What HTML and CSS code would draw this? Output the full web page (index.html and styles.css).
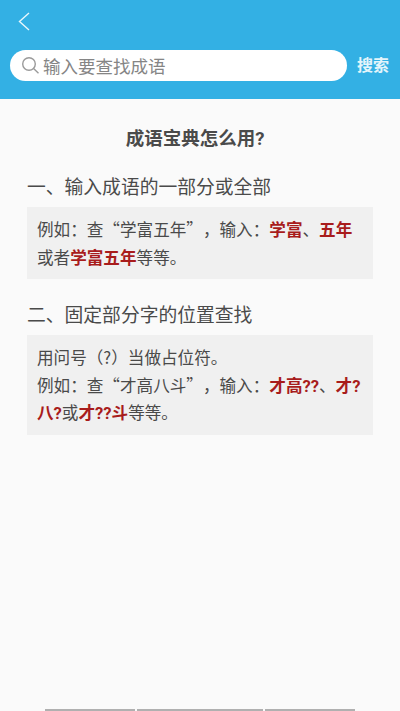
FILE: index.html
```html
<!DOCTYPE html>
<html lang="zh-CN">
<head>
  <meta charset="UTF-8" />
  <meta name="viewport" content="width=device-width, initial-scale=1.0" />
  <title>成语宝典怎么用</title>
  <link rel="stylesheet" href="styles.css">
</head>
<body>
  <header class="header">
    <div class="back-row">
      <svg class="back-icon" width="14" height="20" viewBox="0 0 14 20">
        <path d="M12 2 L2.5 10.5 L12 19" fill="none" stroke="#e8f7fc" stroke-width="1.4" />
      </svg>
    </div>
    <div class="search-row">
      <div class="search-box">
        <svg class="search-icon" width="19" height="19" viewBox="0 0 19 19">
          <circle cx="8" cy="8" r="6.3" fill="none" stroke="#9a9a9a" stroke-width="1.4" />
          <path d="M12.6 12.6 L17.5 17.2" fill="none" stroke="#9a9a9a" stroke-width="1.4" />
        </svg>
        <span class="placeholder">输入要查找成语</span>
      </div>
      <span class="search-btn">搜索</span>
    </div>
  </header>

  <main class="content">
    <h1>成语宝典怎么用?</h1>

    <h2>一、输入成语的一部分或全部</h2>
    <div class="note">
      <p>例如&#xFF1A;查“学富五年”&#xFF0C;输入&#xFF1A;<b>学富</b>、<b>五年</b>或者<b>学富五年</b>等等。</p>
    </div>

    <h2>二、固定部分字的位置查找</h2>
    <div class="note">
      <p>用问号&#xFF08;?&#xFF09;当做占位符。</p>
      <p>例如&#xFF1A;查“才高八斗”&#xFF0C;输入&#xFF1A;<b>才高??</b>、<b>才?八?</b>或<b>才??斗</b>等等。</p>
    </div>
  </main>

  <div class="nav-bars">
    <span class="bar-a"></span>
    <span class="bar-b"></span>
    <span class="bar-a"></span>
  </div>
</body>
</html>
```

FILE: styles.css
```css
body {
  font-family: "Noto Sans CJK SC", "Liberation Sans", sans-serif;
  margin: 0;
  height: 711px;
  overflow: hidden;
  display: flex;
  flex-direction: column;
  background-color: #fafafa;
  color: #4a4a4a;
  text-spacing-trim: space-all;
}

.header {
  height: 99px;
  background-color: #33b0e4;
  flex-shrink: 0;
}

.back-row {
  height: 50px;
  padding: 11px 0 0 17px;
  box-sizing: border-box;
}

.back-icon {
  display: block;
}

.search-row {
  display: flex;
  align-items: flex-start;
  padding-left: 10px;
}

.search-box {
  width: 337px;
  height: 31px;
  background: #fff;
  border-radius: 16px;
  display: flex;
  align-items: center;
  padding-left: 11px;
  box-sizing: border-box;
}

.search-icon {
  flex-shrink: 0;
}

.placeholder {
  margin-left: 3px;
  font-size: 17.5px;
  line-height: 31px;
  color: #858585;
}

.search-btn {
  margin-left: 10px;
  font-size: 16px;
  line-height: 29px;
  font-weight: bold;
  color: #e4f5fb;
}

.content {
  flex: 1;
  padding: 0 27px;
}

h1 {
  margin: 28px 0 0;
  padding-right: 10px;
  font-family: Roboto, "Noto Sans CJK SC", sans-serif;
  font-size: 18.5px;
  line-height: 24px;
  font-weight: bold;
  text-align: center;
}

h2 {
  margin: 22px 0 0;
  font-size: 18.8px;
  line-height: 26px;
  font-weight: normal;
}

.note {
  margin-top: 8px;
  padding: 9px 6px 8px 10px;
  background-color: #f0f0f0;
}

.note p {
  margin: 0;
  font-size: 16.6px;
  line-height: 27.5px;
}

.note b {
  font-family: Roboto, "Noto Sans CJK SC", sans-serif;
  line-height: 1;
  color: #a81c1c;
}

.nav-bars {
  position: absolute;
  left: 45px;
  bottom: 0;
  display: flex;
  gap: 2px;
}

.nav-bars span {
  height: 2px;
  background-color: #b0b0b0;
}

.bar-a {
  width: 90px;
}

.bar-b {
  width: 126px;
}
```
